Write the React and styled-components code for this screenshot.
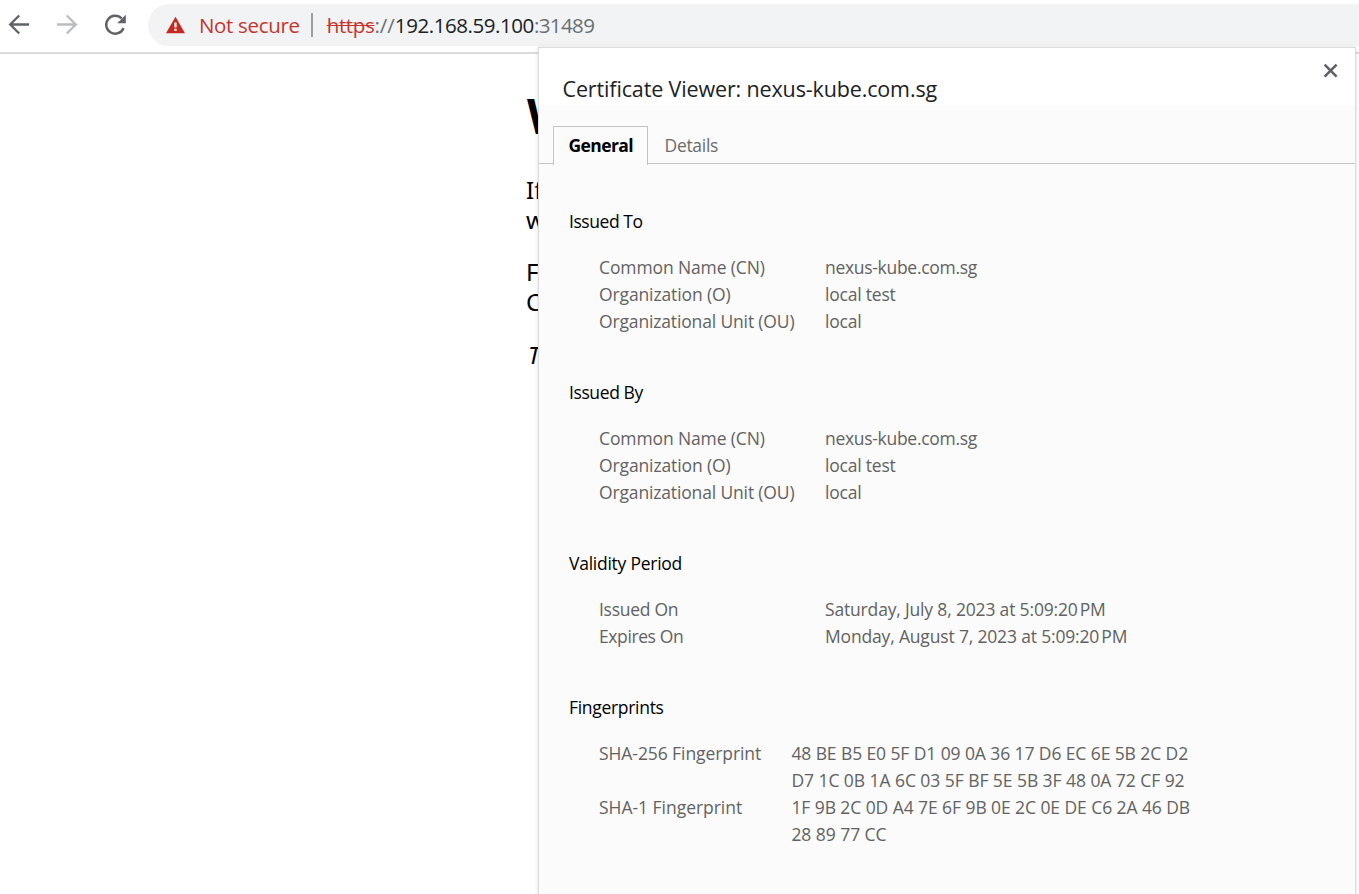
import React from "react";
import styled, { createGlobalStyle } from "styled-components";

const Global = createGlobalStyle`
  * { box-sizing: border-box; }
  body { margin: 0; background: #fff; overflow: hidden; font-family: "Open Sans", "Noto Sans", sans-serif; }
`;

const Window = styled.div`
  position: relative;
  width: 1359px;
  height: 894px;
  overflow: hidden;
  background: #fff;
`;

const Toolbar = styled.header`
  display: flex;
  align-items: flex-start;
  height: 54px;
  padding-top: 4px;
  border-bottom: 2px solid #dadbdc;
`;

const NavButtons = styled.div`
  display: flex;
  align-items: center;
  width: 148px;
  height: 42px;
  padding-left: 6px;
  gap: 22px;
`;

const AddressBar = styled.div`
  display: flex;
  align-items: center;
  flex: 1;
  height: 42px;
  padding-left: 18px;
  border-radius: 21px 0 0 21px;
  background: #f1f3f4;
  font-size: 20.5px;
  line-height: 28px;
  white-space: pre;
`;

const Span = styled.span`
  color: ${(p) => p.$color || "inherit"};
  letter-spacing: ${(p) => p.$track || 0}px;
  text-decoration: ${(p) => (p.$strike ? "line-through" : "none")};
  text-decoration-thickness: 1px;
`;

const Status = styled(Span)`
  margin-left: 14px;
`;

const Divider = styled.i`
  width: 2px;
  height: 24px;
  margin: 0 14px 0 11px;
  background: #9b9da0;
`;

const Page = styled.main`
  width: 660px;
  padding: 28px 0 0 526px;
  color: #000;
  font-family: "Noto Sans", sans-serif;
  font-size: 24px;
  white-space: nowrap;
`;

const PageTitle = styled.h1`
  margin: 0 0 0 1px;
  font: 700 48px/68px "Open Sans", sans-serif;
`;

const Paragraph = styled.p`
  margin: ${(p) => p.$top}px 0 0;
  padding-left: ${(p) => (p.$italic ? 2 : 0)}px;
  line-height: 30px;
  font-style: ${(p) => (p.$italic ? "italic" : "normal")};
`;

const Dialog = styled.section`
  position: absolute;
  left: 539px;
  top: 48px;
  width: 816px;
  height: 860px;
  background: #fbfbfb;
  box-shadow: 0 0 0 1px #dcdcdd, 0 0 4px rgba(0, 0, 0, 0.25);
`;

const DialogHeader = styled.div`
  display: flex;
  justify-content: space-between;
  height: 57px;
  padding: 13px 15px 0 23.5px;
  background: #fff;
`;

const DialogTitle = styled.h2`
  margin: 13px 0 0;
  color: #202124;
  font-size: 21.5px;
  font-weight: 400;
  line-height: 30px;
`;

const Tabs = styled.div`
  display: flex;
  align-items: flex-end;
  height: 59px;
  padding-left: 14px;
  border-bottom: 1px solid #c3c3c3;
`;

const Tab = styled.div`
  height: ${(p) => (p.$active ? 39 : 38)}px;
  width: ${(p) => (p.$active ? 95 : 86)}px;
  padding-left: ${(p) => (p.$active ? 14.5 : 16.5)}px;
  margin-bottom: ${(p) => (p.$active ? -2 : 0)}px;
  border: solid #c3c3c3;
  border-width: ${(p) => (p.$active ? "1px 1px 0" : "0")};
  background: #fbfbfb;
  color: ${(p) => (p.$active ? "#000" : "#6b6b6b")};
  font-size: 17.5px;
  font-weight: ${(p) => (p.$active ? 700 : 400)};
  line-height: ${(p) => (p.$active ? 36 : 40)}px;
`;

const Body = styled.div`
  display: flex;
  flex-direction: column;
  gap: 44px;
  padding: 44px 30px 0;
  font-size: 17.5px;
  line-height: 27px;
  white-space: nowrap;
`;

const SectionTitle = styled.h3`
  margin: 0 0 19px;
  color: #000;
  font-size: inherit;
  font-weight: 400;
`;

const Fields = styled.dl`
  display: grid;
  grid-template-columns: ${(p) => p.$label}px 1fr;
  margin: 0 0 0 30px;
  color: #626262;
`;

const Term = styled.dt``;

const Value = styled.dd`
  margin: 0;
`;

const Line = styled.div``;

// Each text is a pair: the string and its letter spacing in pixels.
const subject = [
  { term: ["Common Name (CN)", -0.12], lines: [["nexus-kube.com.sg", -0.3]] },
  { term: ["Organization (O)", -0.12], lines: [["local test", -0.2]] },
  { term: ["Organizational Unit (OU)", -0.15], lines: [["local", -0.2]] },
];

const sections = [
  { title: ["Issued To", -0.45], label: 226, rows: subject },
  { title: ["Issued By", -0.4], label: 226, rows: subject },
  {
    title: ["Validity Period", -0.25],
    label: 226,
    rows: [
      { term: ["Issued On", -0.28], lines: [["Saturday, July 8, 2023 at 5:09:20\u202fPM", -0.17]] },
      { term: ["Expires On", -0.4], lines: [["Monday, August 7, 2023 at 5:09:20\u202fPM", -0.17]] },
    ],
  },
  {
    title: ["Fingerprints", -0.3],
    label: 192.4,
    rows: [
      {
        term: ["SHA-256 Fingerprint", -0.08],
        lines: [
          ["48 BE B5 E0 5F D1 09 0A 36 17 D6 EC 6E 5B 2C D2", -0.1],
          ["D7 1C 0B 1A 6C 03 5F BF 5E 5B 3F 48 0A 72 CF 92", -0.06],
        ],
      },
      {
        term: ["SHA-1 Fingerprint", -0.03],
        lines: [
          ["1F 9B 2C 0D A4 7E 6F 9B 0E 2C 0E DE C6 2A 46 DB", -0.08],
          ["28 89 77 CC", -0.05],
        ],
      },
    ],
  },
];

const Text = ({ t }) => <Span $track={t[1]}>{t[0]}</Span>;

const BackIcon = () => (
  <svg width="26" height="26" viewBox="0 0 26 26" fill="none" stroke="#5f6368" strokeWidth="2.3">
    <path d="M23 12.5H4.5M13.2 3.5L4.2 12.5l9 9" />
  </svg>
);

const ForwardIcon = () => (
  <svg width="26" height="26" viewBox="0 0 26 26" fill="none" stroke="#babcbe" strokeWidth="2.3">
    <path d="M3 12.5H21.5M12.8 3.5l9 9-9 9" />
  </svg>
);

const ReloadIcon = () => (
  <svg width="26" height="26" viewBox="0 0 26 26">
    <path d="M21.6 16a9 9 0 1 1-1.9-9.5" fill="none" stroke="#5f6368" strokeWidth="2.4" />
    <path d="M23.8 2.8v8.4h-8.6z" fill="#5f6368" />
  </svg>
);

const WarningIcon = () => (
  <svg width="19" height="18" viewBox="0 0 19 18">
    <path d="M9.5 0.8L19 17.2H0z" fill="#c5291f" />
    <path d="M8.4 6.5h2.2v5H8.4zM8.4 12.8h2.2v2.2H8.4z" fill="#fff" />
  </svg>
);

const CloseIcon = () => (
  <svg width="18" height="18" viewBox="0 0 18 18" stroke="#5f6368" strokeWidth="2.6">
    <path d="M2.6 3.6l12 12M14.6 3.6l-12 12" />
  </svg>
);

export default function App() {
  return (
    <Window>
      <Global />
      <Toolbar>
        <NavButtons>
          <BackIcon />
          <ForwardIcon />
          <ReloadIcon />
        </NavButtons>
        <AddressBar>
          <WarningIcon />
          <Status $color="#c5352d" $track={-0.33}>Not secure</Status>
          <Divider />
          <Span $color="#c5352d" $track={-0.35} $strike>https</Span>
          <Span $color="#6b6f73">://</Span>
          <Span $color="#202124" $track={-0.43}>192.168.59.100</Span>
          <Span $color="#6b6f73" $track={-0.6}>:31489</Span>
        </AddressBar>
      </Toolbar>
      <Page>
        <PageTitle>W</PageTitle>
        <Paragraph $top={25}>If<br />w</Paragraph>
        <Paragraph $top={22}>Fo<br />C</Paragraph>
        <Paragraph $top={23} $italic>Th</Paragraph>
      </Page>
      <Dialog>
        <DialogHeader>
          <DialogTitle><Span $track={-0.14}>Certificate Viewer: nexus-kube.com.sg</Span></DialogTitle>
          <CloseIcon />
        </DialogHeader>
        <Tabs>
          <Tab $active><Span $track={-0.6}>General</Span></Tab>
          <Tab><Span $track={-0.3}>Details</Span></Tab>
        </Tabs>
        <Body>
          {sections.map((s) => (
            <section key={s.title[0]}>
              <SectionTitle><Text t={s.title} /></SectionTitle>
              <Fields $label={s.label}>
                {s.rows.map((row) => (
                  <React.Fragment key={row.term[0]}>
                    <Term><Text t={row.term} /></Term>
                    <Value>{row.lines.map((l) => <Line key={l[0]}><Text t={l} /></Line>)}</Value>
                  </React.Fragment>
                ))}
              </Fields>
            </section>
          ))}
        </Body>
      </Dialog>
    </Window>
  );
}
